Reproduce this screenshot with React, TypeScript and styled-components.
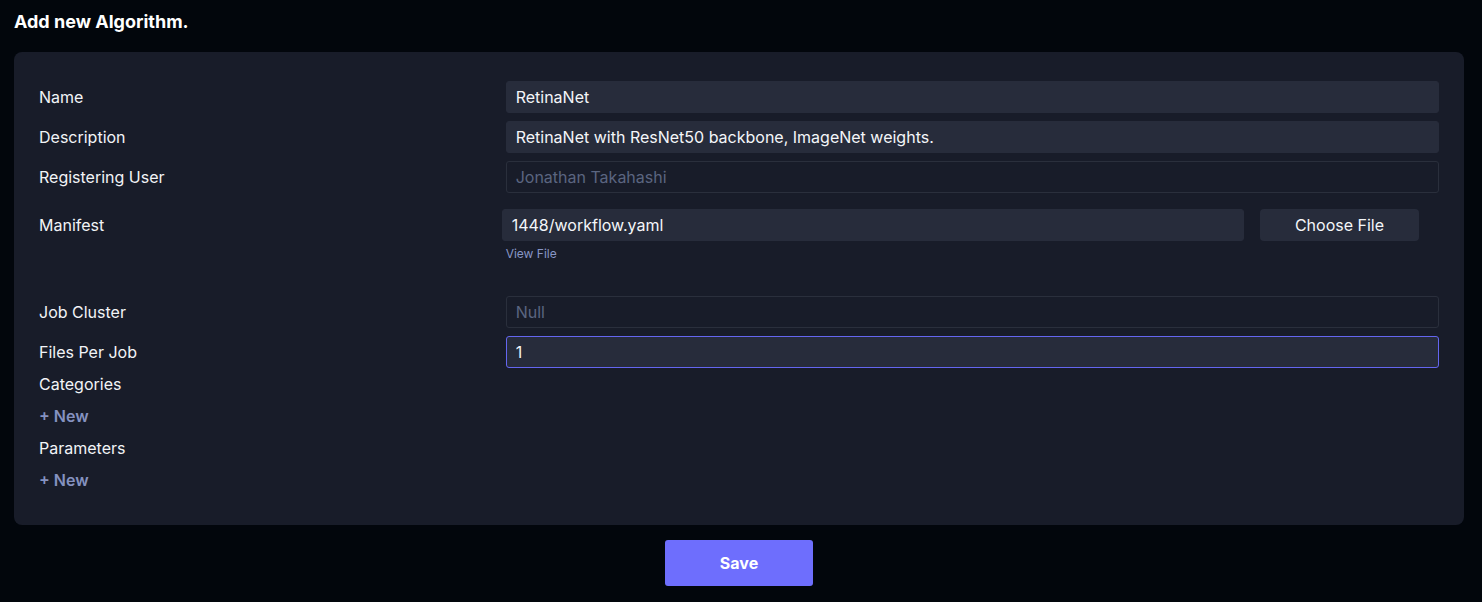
import React from "react";
import styled, { createGlobalStyle } from "styled-components";

const Global = createGlobalStyle`
  html, body { margin: 0; padding: 0; background: #02060c; }
  body { font-family: Inter, "Noto Sans", sans-serif; color: #eef0f4; }
  * { box-sizing: border-box; }
`;

const Page = styled.div`
  padding: 10px 18px 16px 14px;
  min-height: 602px;
`;

const Title = styled.h1`
  margin: 0 0 18px;
  font-size: 18px;
  line-height: 24px;
  font-weight: 700;
  color: #ffffff;
`;

const Card = styled.section`
  background: #181c29;
  border-radius: 8px;
  padding: 29px 25px;
`;

const Fields = styled.div`
  display: flex;
  flex-direction: column;
  gap: 8px;
`;

const Row = styled.div<{ $padTop?: number; $padBottom?: number }>`
  display: grid;
  grid-template-columns: 1fr 2fr;
  align-items: start;
  padding-top: ${(p) => p.$padTop ?? 0}px;
  padding-bottom: ${(p) => p.$padBottom ?? 0}px;
`;

const Label = styled.div`
  font-size: 16px;
  line-height: 32px;
  color: #f2f4f7;
`;

const Input = styled.div<{ $variant?: "filled" | "outline" | "focus"; $placeholder?: boolean }>`
  height: 32px;
  line-height: 30px;
  padding: 0 9px;
  font-size: 16px;
  border-radius: 3px;
  color: ${(p) => (p.$placeholder ? "#5b6580" : "#f4f6f9")};
  background: ${(p) => (p.$variant === "outline" ? "transparent" : "#272c3b")};
  border: 1px solid
    ${(p) =>
      p.$variant === "outline" ? "#2a2f3c" : p.$variant === "focus" ? "#6466f0" : "#272c3b"};
  white-space: nowrap;
  overflow: hidden;
`;

const FileCol = styled.div`
  margin-left: -4px;
  display: flex;
  flex-direction: column;
`;

const FileLine = styled.div`
  display: flex;
  gap: 16px;
  padding-right: 20px;
`;

const FileInput = styled(Input)`
  flex: 1;
`;

const ChooseButton = styled.button`
  width: 159px;
  height: 32px;
  border: none;
  border-radius: 4px;
  background: #272c3b;
  color: #f4f6f9;
  font-family: inherit;
  font-size: 16px;
`;

const ViewLink = styled.a`
  margin-top: 4px;
  margin-left: 4px;
  font-size: 12px;
  line-height: 18px;
  color: #8896c6;
  text-decoration: none;
`;

const Line = styled.div<{ $link?: boolean }>`
  font-size: 16px;
  line-height: 32px;
  font-weight: ${(p) => (p.$link ? 600 : 400)};
  color: ${(p) => (p.$link ? "#8592c0" : "#f2f4f7")};
`;

const Footer = styled.div`
  display: flex;
  justify-content: center;
  margin-top: 15px;
`;

const SaveButton = styled.button`
  width: 148px;
  height: 46px;
  border: none;
  border-radius: 3px;
  background: #6e6efd;
  color: #ffffff;
  font-family: inherit;
  font-size: 16px;
  font-weight: 700;
`;

export default function App() {
  return (
    <>
      <Global />
      <Page>
        <Title>Add new Algorithm.</Title>
        <Card>
          <Fields>
            <Row>
              <Label>Name</Label>
              <Input>RetinaNet</Input>
            </Row>
            <Row>
              <Label>Description</Label>
              <Input>RetinaNet with ResNet50 backbone, ImageNet weights.</Input>
            </Row>
            <Row>
              <Label>Registering User</Label>
              <Input $variant="outline" $placeholder>
                Jonathan Takahashi
              </Input>
            </Row>
            <Row $padTop={8} $padBottom={25}>
              <Label>Manifest</Label>
              <FileCol>
                <FileLine>
                  <FileInput>1448/workflow.yaml</FileInput>
                  <ChooseButton>Choose File</ChooseButton>
                </FileLine>
                <ViewLink href="#">View File</ViewLink>
              </FileCol>
            </Row>
            <Row>
              <Label>Job Cluster</Label>
              <Input $variant="outline" $placeholder>
                Null
              </Input>
            </Row>
            <Row>
              <Label>Files Per Job</Label>
              <Input $variant="focus">1</Input>
            </Row>
          </Fields>
          <Line>Categories</Line>
          <Line $link>+ New</Line>
          <Line>Parameters</Line>
          <Line $link>+ New</Line>
        </Card>
        <Footer>
          <SaveButton>Save</SaveButton>
        </Footer>
      </Page>
    </>
  );
}
